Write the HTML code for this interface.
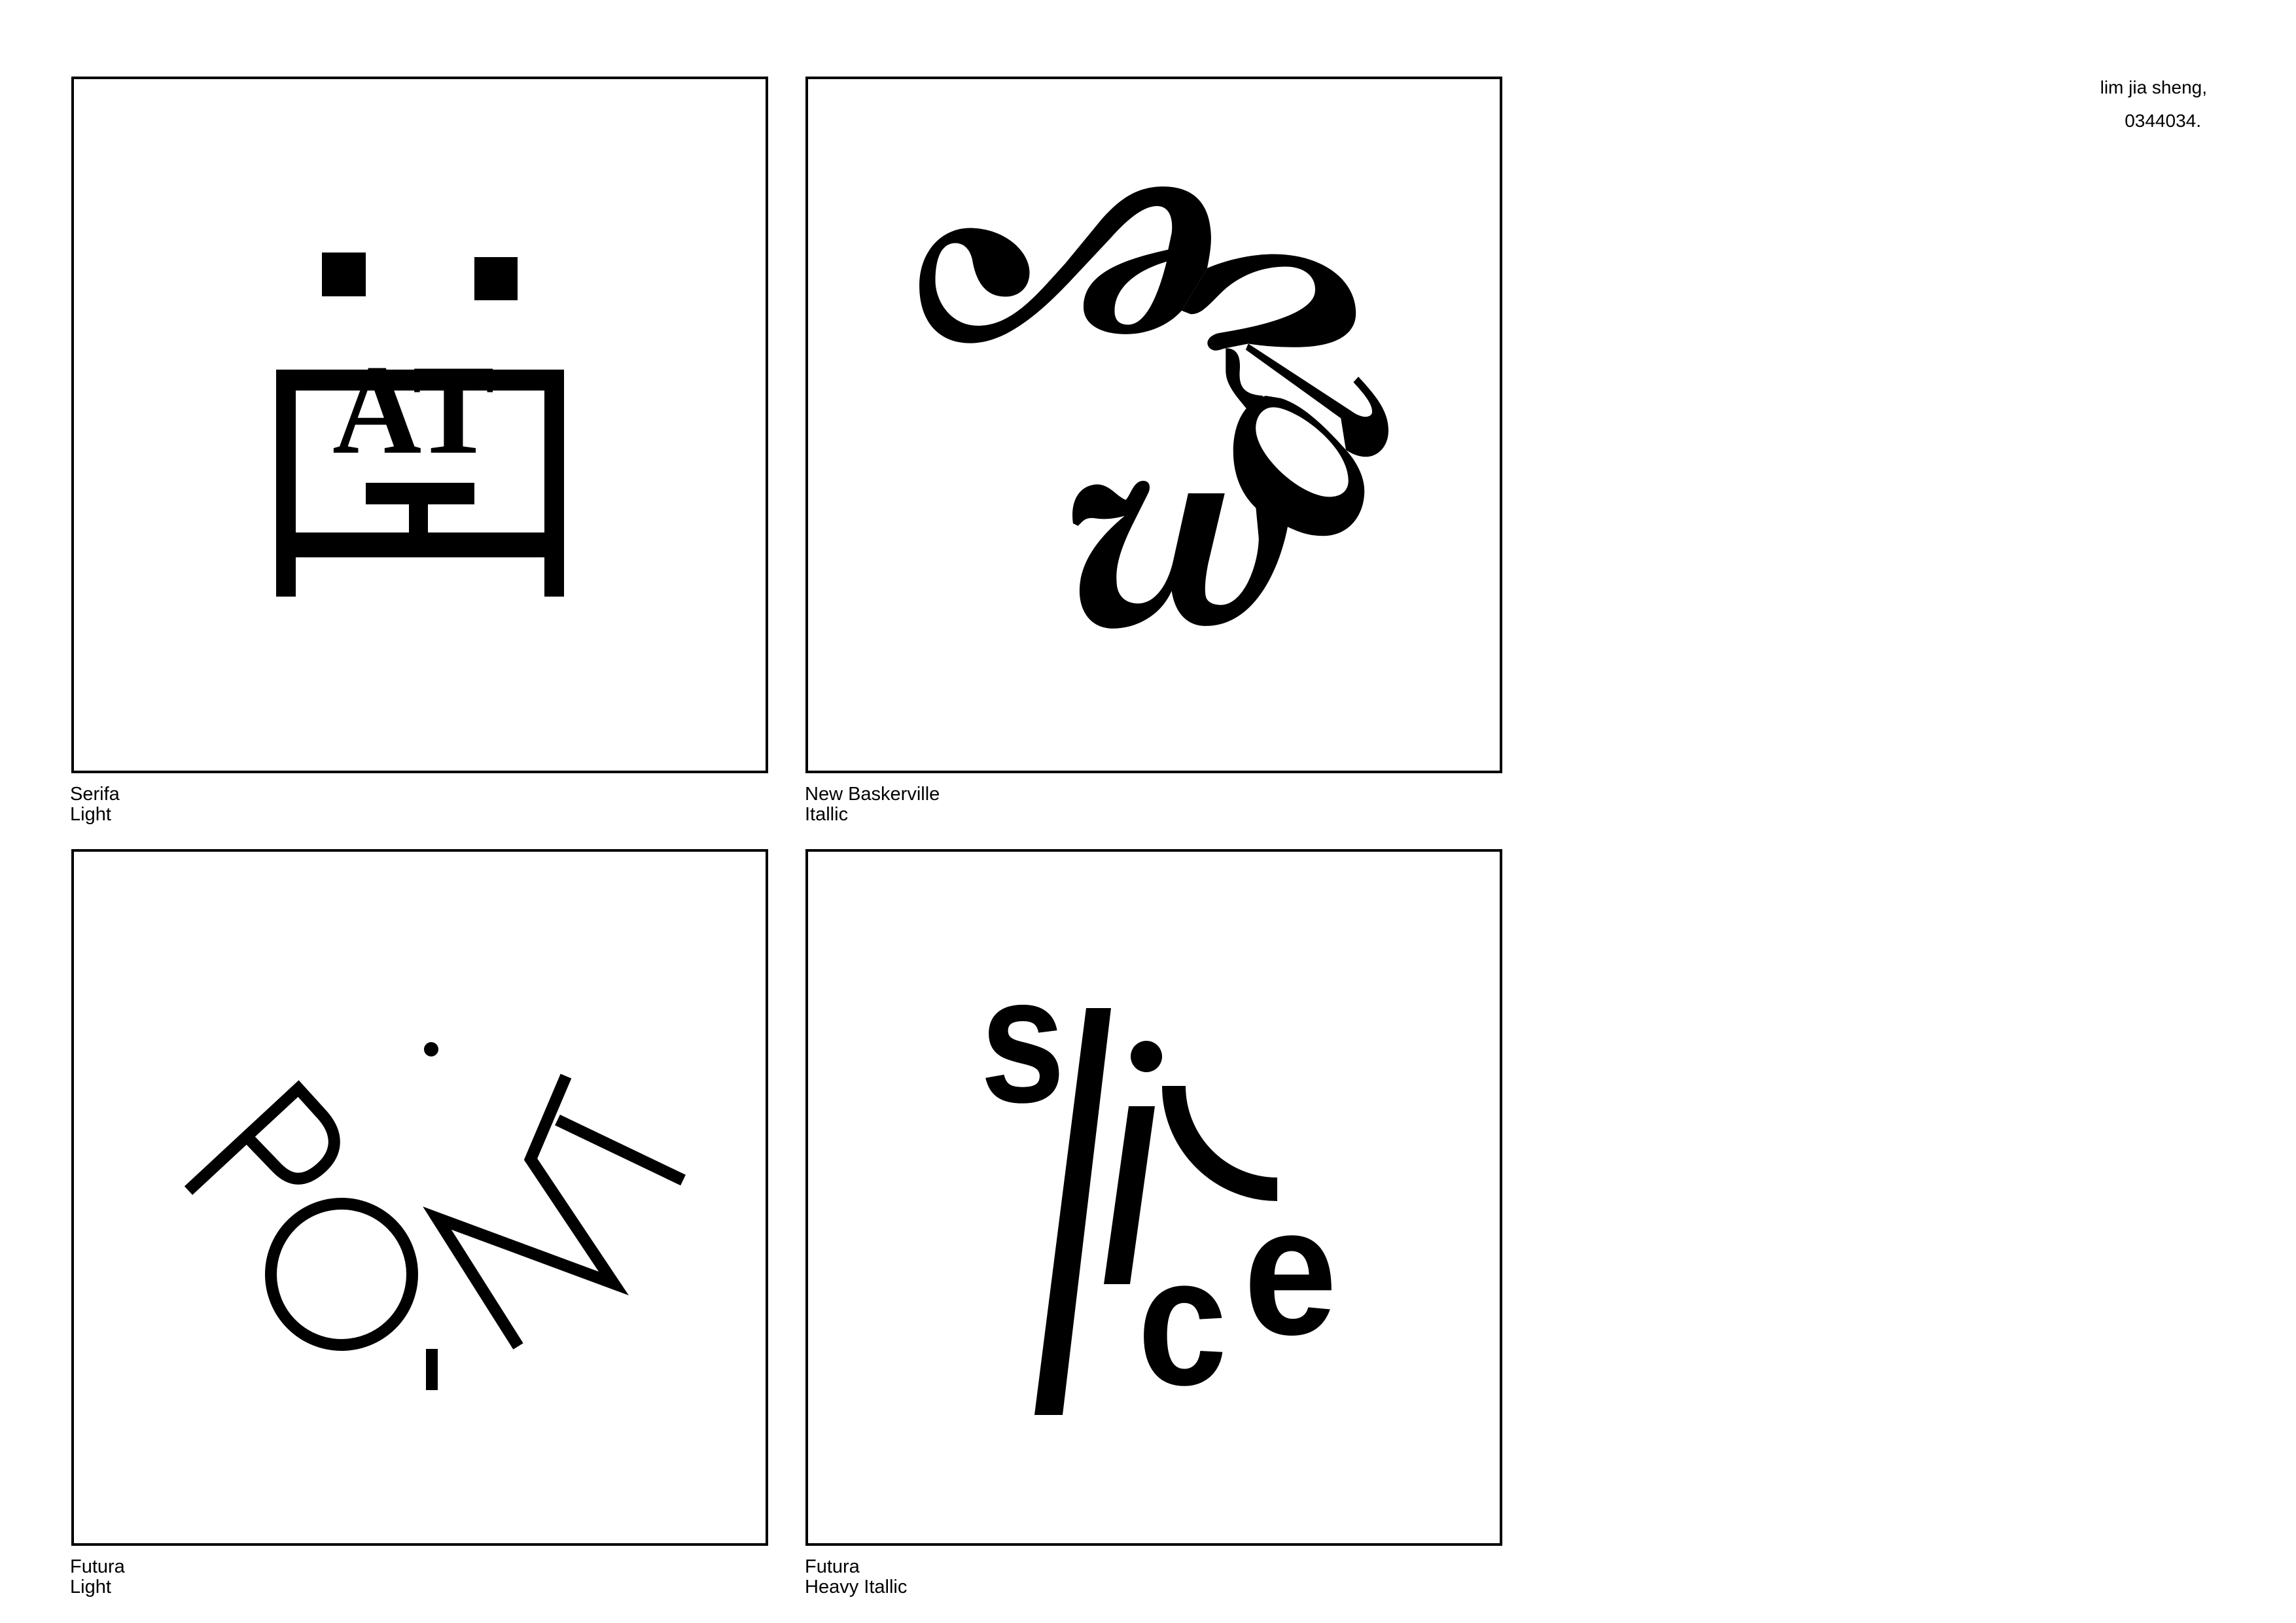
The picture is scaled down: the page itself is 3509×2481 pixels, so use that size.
<!DOCTYPE html>
<html><head><meta charset="utf-8"><style>
html,body{margin:0;padding:0;background:#fff;}
svg{display:block;}
</style></head><body>
<svg width="3509" height="2481" viewBox="0 0 3509 2481" xmlns="http://www.w3.org/2000/svg">
<rect width="3509" height="2481" fill="#fff"/>
<g fill="none" stroke="#000" stroke-width="4">
<rect x="111" y="119" width="1061" height="1061"/>
<rect x="1233" y="119" width="1061" height="1061"/>
<rect x="111" y="1300" width="1061" height="1061"/>
<rect x="1233" y="1300" width="1061" height="1061"/>
</g>
<g font-family="Liberation Sans, sans-serif" font-size="29" fill="#000">
<text x="107" y="1223">Serifa</text><text x="107" y="1254">Light</text>
<text x="1230" y="1223">New Baskerville</text><text x="1230" y="1254">Itallic</text>
<text x="107" y="2404">Futura</text><text x="107" y="2435">Light</text>
<text x="1230" y="2404">Futura</text><text x="1230" y="2435">Heavy Itallic</text>
<text x="3373" y="143" text-anchor="end" font-size="28">lim jia sheng,</text>
<text x="3364" y="194" text-anchor="end" font-size="28">0344034.</text>
</g>
<!-- Box 1 -->
<g fill="#000">
<rect x="492" y="386" width="67" height="67"/>
<rect x="725" y="393" width="66" height="66"/>
<rect x="422" y="565" width="30" height="347"/>
<rect x="832" y="565" width="30" height="347"/>
<rect x="422" y="565" width="440" height="32"/>
<rect x="422" y="814" width="440" height="38"/>
<rect x="559" y="738" width="166" height="33"/>
<rect x="625" y="771" width="29" height="43"/>
</g>
<text x="508" y="692" font-family="Liberation Serif, serif" font-weight="bold" font-size="196" textLength="248" lengthAdjust="spacingAndGlyphs" fill="#000">AT</text>
<!-- Box 2 -->
<g transform="translate(1200,100) scale(0.7651)" fill="#000">
<path d="M375,395 C385,445 410,462 440,462 C470,462 490,440 488,410 C485,370 440,328 375,325 C315,322 268,370 268,440 C268,510 305,555 370,555 C440,555 510,495 575,425 L650,345 C690,300 720,280 745,281 C770,283 775,310 772,335 L765,368 C690,385 598,410 596,480 C594,520 635,537 680,537 C730,537 770,515 792,490 L843,405 C850,370 852,350 850,330 C845,270 810,242 755,242 C700,242 665,270 630,310 L560,395 C505,455 455,520 385,520 C330,520 300,470 300,430 C300,380 315,355 340,355 C360,355 372,372 375,395 Z"/>
<path fill="#fff" d="M762,392 C700,410 658,445 658,490 C658,510 668,518 685,518 C720,518 745,460 762,392 Z"/>
<path d="M792,490 L843,405 C890,385 940,377 975,377 C1075,377 1140,430 1140,495 C1140,540 1095,563 1020,563 C980,563 950,560 925,556 L885,564 C870,566 860,575 848,565 C838,555 845,540 865,535 C960,520 1050,495 1058,455 C1063,425 1040,402 1000,402 C945,402 900,425 870,455 C840,485 830,497 810,497 Z"/>
<path d="M925,556 L1130,690 C1150,705 1168,705 1172,695 C1175,680 1160,660 1135,633 L1145,622 C1180,660 1205,690 1205,730 C1205,760 1185,782 1160,782 C1145,782 1130,775 1120,768 L1110,705 L920,568 Z"/>
<path d="M880,565 C905,565 910,585 908,610 C906,640 915,658 955,660 L925,690 C905,665 880,640 880,610 Z"/>
<path fill-rule="evenodd" d="M960,660 C915,672 895,720 895,770 C895,840 930,895 1000,920 C1030,935 1050,940 1075,940 C1125,940 1157,900 1157,850 C1157,820 1140,790 1120,768 C1090,735 1040,680 990,665 Z M975,683 C1020,683 1125,760 1125,830 C1125,850 1110,862 1088,862 C1030,862 940,780 940,725 C940,700 955,683 975,683 Z"/>
<path d="M575,915 C570,880 580,845 615,838 C645,832 660,860 680,868 C690,860 695,830 715,830 C730,830 730,845 725,855 L695,915 C670,965 660,1000 662,1030 C662,1060 680,1075 705,1075 C740,1075 765,1035 775,990 L805,855 L878,855 L845,995 C838,1030 838,1050 840,1060 C842,1072 855,1078 870,1078 C915,1078 945,1000 946,945 L938,860 L1005,915 C990,1000 940,1120 840,1120 C800,1120 778,1090 772,1050 C750,1100 700,1125 655,1125 C610,1125 588,1090 588,1050 C588,990 630,940 678,900 C660,905 640,908 620,905 C600,902 595,910 585,920 Z"/>
</g>
<!-- Box 3 -->
<g fill="none" stroke="#000" stroke-width="18">
<path d="M288,1820 L456,1664 L494,1706 C517,1733 517,1762 490,1786 C465,1808 444,1806 424,1786 L372,1732"/>
<circle cx="522" cy="1948" r="108"/>
<path d="M792,2058 L668,1862 L938,1962 L811,1772 L865,1645"/>
<path d="M852,1712 L1044,1804"/>
</g>
<circle cx="659" cy="1604" r="11" fill="#000"/>
<rect x="651" y="2062" width="18" height="63" fill="#000"/>
<!-- Box 4 -->
<g fill="#000">
<polygon points="1581,2163 1624,2163 1698,1541 1660,1541"/>
<polygon points="1687,1963 1727,1963 1765,1691 1725,1691"/>
<circle cx="1752" cy="1615" r="24"/>
</g>
<path d="M1794,1660 A158,158 0 0 0 1952,1818" fill="none" stroke="#000" stroke-width="36"/>
<g font-family="Liberation Sans, sans-serif" font-weight="bold" font-size="280" fill="#000" text-anchor="middle">
<text transform="translate(1563,1684) scale(0.85,1)" font-size="275">s</text>
<text transform="translate(1807,2116) scale(0.88,1)">c</text>
<text transform="translate(1972,2039) scale(0.92,1)">e</text>
</g>
</svg>
</body></html>
